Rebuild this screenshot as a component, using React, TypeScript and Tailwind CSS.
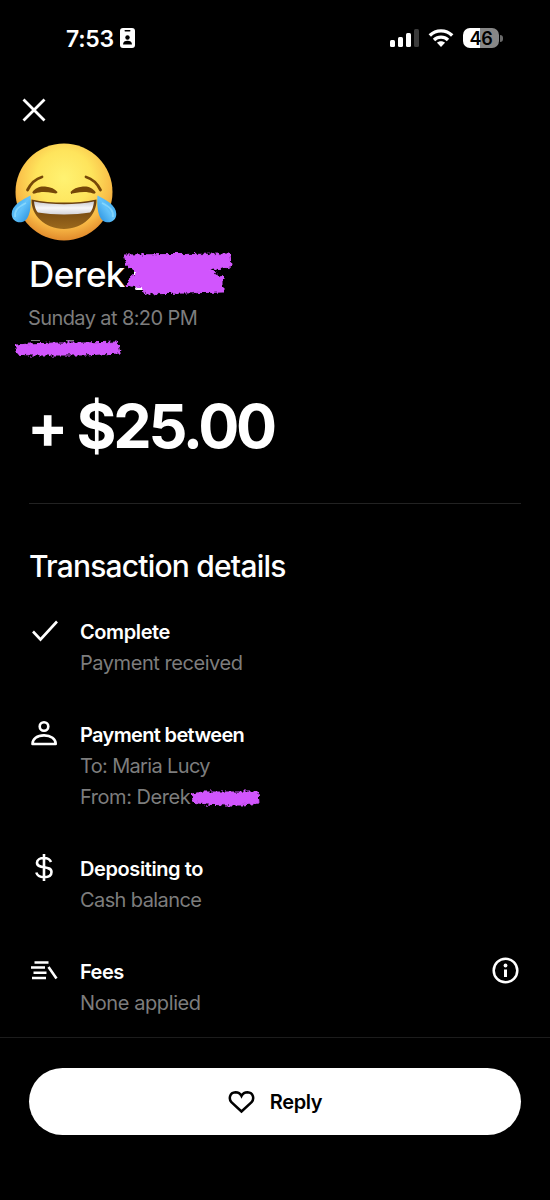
import { ReactNode } from "react"

interface Detail {
    title: string
    lines: { text: string; tracking: string }[]
    titleTracking: string
    icon: ReactNode
    hidden?: boolean
    info?: boolean
}

function Tear() {
    return (
        <>
            <path d="M30.500 105.500C22 110 11.700 115 11.700 124C11.700 129.500 16 132.800 21 132.300C29 131.500 31.500 120 30.500 105.500Z" fill="url(#tear)" />
            <path d="M26 113C18 117 14.500 120 15 127" fill="none" stroke="#9be3ff" strokeWidth="1.800" opacity=".6" />
        </>
    )
}

function JoyFace() {
    return (
        <svg className="block h-[100px] w-[110px]" viewBox="9 52 110 100">
            <defs>
                <radialGradient id="face" cx=".5" cy=".36" r=".64">
                    <stop offset="0" stopColor="#fff272" />
                    <stop offset=".45" stopColor="#fee45c" />
                    <stop offset=".78" stopColor="#f9bb47" />
                    <stop offset="1" stopColor="#e18a2b" />
                </radialGradient>
                <linearGradient id="tear" x1="0" y1="0" x2="1" y2="1">
                    <stop offset="0" stopColor="#2c9ce8" />
                    <stop offset=".5" stopColor="#63c3fa" />
                    <stop offset="1" stopColor="#2189db" />
                </linearGradient>
                <linearGradient id="mouth" x1="0" y1="0" x2="0" y2="1">
                    <stop offset="0" stopColor="#653b0c" />
                    <stop offset="1" stopColor="#9a681c" />
                </linearGradient>
                <linearGradient id="teeth" x1="0" y1="0" x2="0" y2="1">
                    <stop offset="0" stopColor="#c9c9cf" />
                    <stop offset=".5" stopColor="#f7f7f9" />
                    <stop offset="1" stopColor="#d5d4da" />
                </linearGradient>
            </defs>
            <circle cx="64" cy="102" r="48.500" fill="url(#face)" />
            <g transform="translate(0 10)">
                <g fill="none" stroke="#754708" strokeLinecap="round">
                    <path d="M27.500 90C31 83 35 79 42 77" strokeWidth="2.800" />
                    <path d="M100.500 90C97 83 93 79 86 77" strokeWidth="2.800" />
                </g>
                <path d="M32.500 92C35 88 40 86 45 86.500C51 87 55 89 57.500 92C57 94 55 93.500 53 93C46 91.500 40 91.500 35 93.500C33 94 32 93 32.500 92Z" fill="#754708" />
                <path d="M95.500 92C93 88 88 86 83 86.500C77 87 73 89 70.500 92C71 94 73 93.500 75 93C82 91.500 88 91.500 93 93.500C95 94 96 93 95.500 92Z" fill="#754708" />
                <path d="M31.500 99.500C42 102 53 102.500 64 102.500C75 102.500 86 102 96.500 99.500C97 115 83 129 64 129C45 129 31 115 31.500 99.500Z" fill="url(#mouth)" />
                <path d="M34 101.500C52 105 76 105 94 101.500C93.500 106 92 111 90 112.500C75 115 53 115 38 112.500C36 111 34.500 106 34 101.500Z" fill="url(#teeth)" />
            </g>
            <Tear />
            <g transform="matrix(-1 0 0 1 128 0)"><Tear /></g>
        </svg>
    )
}

function Scribble({ d, size, id, className }: { d: string; size: [number, number]; id: string; className: string }) {
    return (
        <svg className={`absolute overflow-visible ${className}`} width={size[0]} height={size[1]}>
            <filter id={id} x="-10%" y="-20%" width="120%" height="140%">
                <feTurbulence type="fractalNoise" baseFrequency=".28" numOctaves="2" seed="4" />
                <feDisplacementMap in="SourceGraphic" scale="6" xChannelSelector="R" yChannelSelector="G" />
            </filter>
            <path d={d} fill="#d155fd" stroke="#d155fd" strokeLinejoin="round" filter={`url(#${id})`} />
        </svg>
    )
}

const iconProps = {
    className: "block h-8 w-8 shrink-0 -mt-px",
    viewBox: "0 0 32 32",
    fill: "none",
    stroke: "currentColor",
    strokeWidth: 2.6,
}

const details: Detail[] = [
    {
        title: "Complete",
        lines: [{ text: "Payment received", tracking: "tracking-[-0.45px]" }],
        titleTracking: "tracking-[-0.4px]",
        icon: <svg {...iconProps}><path d="M5 15.500L12.500 23.500L29 5.500" /></svg>,
    },
    {
        title: "Payment between",
        lines: [
            { text: "To: Maria Lucy", tracking: "tracking-[-0.65px]" },
            { text: "From: Derek", tracking: "tracking-[-0.45px]" },
        ],
        titleTracking: "tracking-[-0.65px]",
        hidden: true,
        icon: (
            <svg {...iconProps}>
                <circle cx="16" cy="7.500" r="4.300" />
                <path d="M4.500 25C4.500 20 9 16.400 16 16.400S27.700 20 27.700 25Z" strokeLinejoin="round" />
            </svg>
        ),
    },
    {
        title: "Depositing to",
        lines: [{ text: "Cash balance", tracking: "tracking-[-0.6px]" }],
        titleTracking: "tracking-[-0.4px]",
        icon: (
            <svg {...iconProps}>
                <path d="M16 1V28M23 9C22 6.500 19.500 5 16 5C12 5 9 6.700 9 9.700C9 16.500 23.500 12 23.500 19C23.500 22.400 20.500 24.200 16 24.200C12 24.200 9.200 22.500 8.300 19.500" />
            </svg>
        ),
    },
    {
        title: "Fees",
        lines: [{ text: "None applied", tracking: "tracking-[-0.4px]" }],
        titleTracking: "tracking-[-0.5px]",
        info: true,
        icon: (
            <svg {...iconProps}>
                <path d="M6.500 6.500H20.500M3 11.500H17M5.500 16.800H18.500M4 22H18M20.500 11L28.500 22.500" />
            </svg>
        ),
    },
]

function StatusBar() {
    return (
        <div className="flex h-[76px] items-center pr-[47px] pl-[66px]">
            <span className="mt-[2px] text-[23px] font-semibold tracking-[-0.3px]">7:53</span>
            <svg className="ml-[6px] h-5 w-[15px]" viewBox="0 0 15 20">
                <rect width="15" height="20" rx="3" fill="#fff" />
                <rect x="4.500" y="2" width="6" height="1.500" rx=".7" fill="#000" />
                <circle cx="7.500" cy="9.500" r="2.200" fill="#000" />
                <path d="M3 16.500C3 13.800 5 12.800 7.500 12.800S12 13.800 12 16.500Z" fill="#000" />
            </svg>
            <div className="ml-auto flex items-center">
                <div className="flex h-[18px] items-end gap-[3px]">
                    <i className="h-[7px] w-[5px] rounded-[1.500px] bg-white" />
                    <i className="h-[10px] w-[5px] rounded-[1.500px] bg-white" />
                    <i className="h-[14px] w-[5px] rounded-[1.500px] bg-white" />
                    <i className="h-[18px] w-[5px] rounded-[1.500px] bg-[#3b3b3b]" />
                </div>
                <svg className="ml-[9px] h-[18px] w-[26px]" viewBox="0 0 26 18" fill="none" stroke="#fff" strokeWidth="3.400">
                    <path d="M1.800 6.500C8 .3 18 .3 24.200 6.500M6 11C10 7.200 16 7.200 20 11" />
                    <path d="M13 18L9 13.800C11 11.800 15 11.800 17 13.800Z" fill="#fff" stroke="none" />
                </svg>
                <div className="ml-[9px] flex h-5 w-9 items-center justify-center rounded-[7px] bg-linear-to-r from-white from-46% to-[#878787] to-46% text-[18px] font-semibold tracking-[-0.3px] text-black">
                    46
                </div>
                <i className="ml-px h-[7px] w-[3px] rounded-r-full bg-[#6b6b6b]" />
            </div>
        </div>
    )
}

export default function App() {
    return (
        <div className="flex h-[1200px] w-[550px] flex-col overflow-hidden bg-black font-[Inter,sans-serif] text-white">
            <StatusBar />

            {/* Header */}
            <button className="mt-[22px] ml-[22px] h-6 w-6">
                <svg viewBox="0 0 24 24" fill="none" stroke="currentColor" strokeWidth="2.800">
                    <path d="M1.500 1.500L22.500 22.500M22.500 1.500L1.500 22.500" />
                </svg>
            </button>
            <div className="mt-5 ml-[9px]"><JoyFace /></div>

            <div className="relative mx-[29px] mt-[10px]">
                <h1 className="pt-px text-[35px] leading-[43px] font-medium tracking-[-0.6px]">Derek</h1>
                <p className="-ml-px mt-[7px] text-[20px] leading-[30px] tracking-[-0.6px] text-[#7d7d7d]">Sunday at 8:20 PM</p>
                {/* letter edges left visible around the strokes */}
                <i className="absolute top-[16px] left-[105px] h-[7px] w-[3px] bg-white" />
                <i className="absolute top-[35px] left-[106px] h-[3px] w-[11px] rounded-full bg-white" />
                <i className="absolute top-[16px] left-[179px] h-[8px] w-[2px] bg-white" />
                <i className="absolute top-[88px] left-[2px] h-px w-[9px] bg-[#7d7d7d]" />
                <i className="absolute top-[88px] left-[37px] h-px w-[8px] bg-[#7d7d7d]" />
                <Scribble
                    id="rough-name"
                    className="top-0 left-[93px]"
                    size={[112, 44]}
                    d="M2 3L108 2L109 15L87 18L101 25L101 40L24 42L20 36L5 33L8 26L15 20L5 13Z"
                />
                <Scribble
                    id="rough-handle"
                    className="top-[87px] left-[-15px]"
                    size={[110, 18]}
                    d="M2 6L16 5L40 4L70 4L104 3L106 14L70 16L35 16L16 16L2 15Z"
                />
            </div>

            <div className="mx-[29px] mt-[58px] text-[61px] leading-[70px] font-bold tracking-[-3.200px]">
                <span className="-ml-[2px]">+ $25.00</span>
            </div>
            <div className="mx-[29px] mt-[42px] h-px shrink-0 bg-[#222]" />

            {/* Details */}
            <h2 className="mx-[29px] mt-[42px] text-[30px] leading-[40px] font-medium tracking-[-0.800px]">
                Transaction details
            </h2>
            <div className="mx-[29px] mt-[31px] flex flex-col gap-[41px]">
                {details.map(item => (
                    <div key={item.title} className="flex items-start text-[20px] leading-[31px]">
                        <div className="-ml-px w-[52px]">{item.icon}</div>
                        <div>
                            <div className={`font-semibold ${item.titleTracking}`}>{item.title}</div>
                            {item.lines.map(line => (
                                <div key={line.text} className={`relative text-[#7d7d7d] ${line.tracking}`}>
                                    {line.text}
                                    {item.hidden && line.text.startsWith("From") && (
                                        <Scribble
                                            id="rough-from"
                                            className="top-[6px] left-[110px]"
                                            size={[70, 19]}
                                            d="M2 6L12 4L35 4L52 4L68 4L69 15L52 17L35 17L16 16L3 14Z"
                                        />
                                    )}
                                </div>
                            ))}
                        </div>
                        {item.info && (
                            <svg className="mr-[2px] ml-auto h-[27px] w-[27px]" viewBox="0 0 27 27" fill="none" stroke="#fff" strokeWidth="2.500">
                                <circle cx="13.500" cy="13.500" r="11.800" />
                                <path d="M13.500 12.500V20" strokeWidth="3" />
                                <circle cx="13.500" cy="8.500" r="1.900" fill="#fff" stroke="none" />
                            </svg>
                        )}
                    </div>
                ))}
            </div>

            {/* Footer */}
            <div className="mt-auto h-[163px] shrink-0 border-t border-[#1c1c1c] px-[29px] pt-[30px]">
                <button className="flex h-[67px] w-full items-center justify-center rounded-full bg-white text-[20px] font-semibold tracking-[-0.4px] text-black">
                    <svg className="mr-[15px] h-6 w-[27px]" viewBox="0 0 27 24" fill="none" stroke="currentColor" strokeWidth="2.500">
                        <path d="M13.500 21.500L3.400 12.200C.6 9 1.400 2.500 7.500 2.200C10.500 2.200 12.500 4 13.500 6C14.500 4 16.500 2.200 19.500 2.200C25.600 2.500 26.400 9 23.600 12.200Z" />
                    </svg>
                    Reply
                </button>
            </div>
        </div>
    )
}
